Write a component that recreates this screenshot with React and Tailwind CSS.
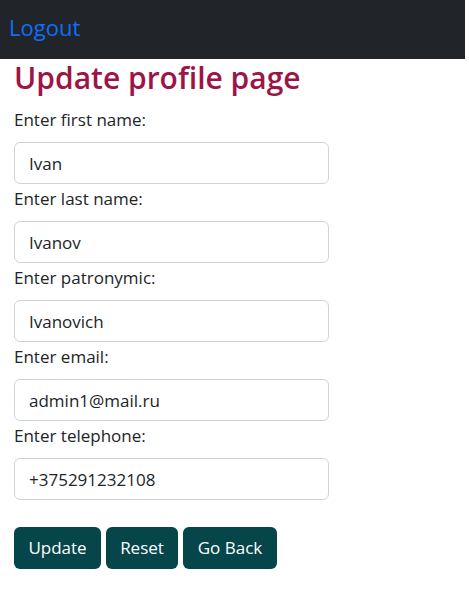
import React, { useState } from "react";

const initial = {
  firstName: "Ivan",
  lastName: "Ivanov",
  patronymic: "Ivanovich",
  email: "admin1@mail.ru",
  telephone: "+375291232108",
};

const fields = [
  { key: "firstName", label: "Enter first name:" },
  { key: "lastName", label: "Enter last name:" },
  { key: "patronymic", label: "Enter patronymic:" },
  { key: "email", label: "Enter email:" },
  { key: "telephone", label: "Enter telephone:" },
];

export default function App() {
  const [form, setForm] = useState(initial);

  const handleChange = (key, value) => {
    setForm({ ...form, [key]: value });
  };

  const btn = "h-[42px] bg-[#06454a] text-white text-[17px] rounded-[6px] flex items-center justify-center";

  return (
    <div className="min-h-screen bg-white text-[#212529] font-['Open_Sans',sans-serif]">
      {/* Navbar */}
      <nav className="w-[465px] h-[59px] bg-[#212529] flex items-center px-[9px] pb-[5px]">
        <a href="#" className="text-[22px] text-[#0d6efd] leading-none">Logout</a>
      </nav>

      <main className="px-[14px]">
        <h1 className="mt-[3px] text-[30px] leading-[32px] font-semibold text-[#9d1548] mb-[12px]">Update profile page</h1>

        <form onSubmit={(e) => e.preventDefault()}>
          {fields.map((f, i) => (
            <div key={f.key}>
              <label className={`block text-[17px] leading-6 pt-[2px] mb-[10px] ${i === 0 ? "" : "mt-[1px]"}`}>{f.label}</label>
              <input
                value={form[f.key]}
                onChange={(e) => handleChange(f.key, e.target.value)}
                className="block w-[315px] h-[42px] px-[14px] text-[17px] text-[#212529] border border-[#ced4da] rounded-[6px] outline-none"
              />
            </div>
          ))}

          <div className="flex gap-[5px] mt-[27px]">
            <button type="submit" className={`${btn} w-[87px]`}>Update</button>
            <button type="button" onClick={() => setForm(initial)} className={`${btn} w-[72px]`}>Reset</button>
            <button type="button" className={`${btn} w-[94px]`}>Go Back</button>
          </div>
        </form>
      </main>
    </div>
  );
}
